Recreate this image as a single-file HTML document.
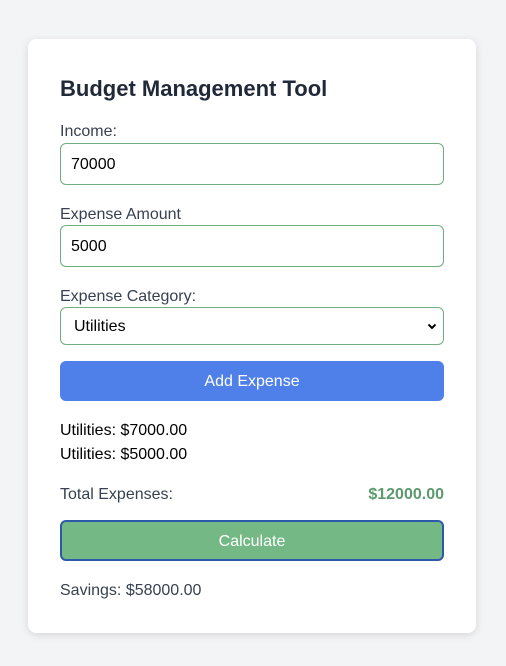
<!DOCTYPE html>
<html><head><style>
*{box-sizing:border-box;margin:0;padding:0}
body{width:506px;height:666px;background:#f3f4f6;font-family:"Liberation Sans",Arial,sans-serif;position:relative;overflow:hidden}
.card{position:absolute;left:28px;top:39px;width:448px;height:594px;background:#fff;border-radius:8px;box-shadow:0 2px 8px rgba(0,0,0,.12)}
.a{position:absolute;left:60px;white-space:nowrap}
h1{font-size:22px;font-weight:bold;color:#1f2937}
.l{font-size:16px;color:#374151}
.in{position:absolute;left:60px;width:384px;border:1px solid #6fae7f;border-radius:6px;background:#fff;font-size:16px;color:#000;padding-left:10px;padding-top:2px;display:flex;align-items:center}
.btn{position:absolute;left:60px;width:384px;height:40px;border-radius:6px;color:#fff;font-size:16px;display:flex;align-items:center;justify-content:center;padding-top:2px}
.t{font-size:16px;color:#000}
</style></head><body>
<div class="card"></div>
<h1 class="a" style="top:76px">Budget Management Tool</h1>
<div class="a l" style="top:123px">Income:</div>
<div class="in" style="top:143px;height:42px">70000</div>
<div class="a l" style="top:206px">Expense Amount</div>
<div class="in" style="top:225px;height:42px">5000</div>
<div class="a l" style="top:288px">Expense Category:</div>
<div class="in" style="top:307px;height:38px;padding-left:13px">Utilities
<svg style="position:absolute;right:6px;top:15px" width="10" height="7" viewBox="0 0 10 7"><path d="M1.5 1.5L5 5 8.5 1.5" stroke="#000" stroke-width="2" fill="none"/></svg></div>
<div class="btn" style="top:361px;background:#4f80ea">Add Expense</div>
<div class="a t" style="top:422px">Utilities: $7000.00</div>
<div class="a t" style="top:446px">Utilities: $5000.00</div>
<div class="a l" style="top:486px">Total Expenses:</div>
<div class="a" style="left:auto;right:62px;top:486px;font-size:16px;font-weight:bold;color:#5a9a6d">$12000.00</div>
<div class="btn" style="top:520px;height:41px;background:#74b886;border:2px solid #2c5aa8">Calculate</div>
<div class="a l" style="top:582px">Savings: $58000.00</div>
</body></html>
